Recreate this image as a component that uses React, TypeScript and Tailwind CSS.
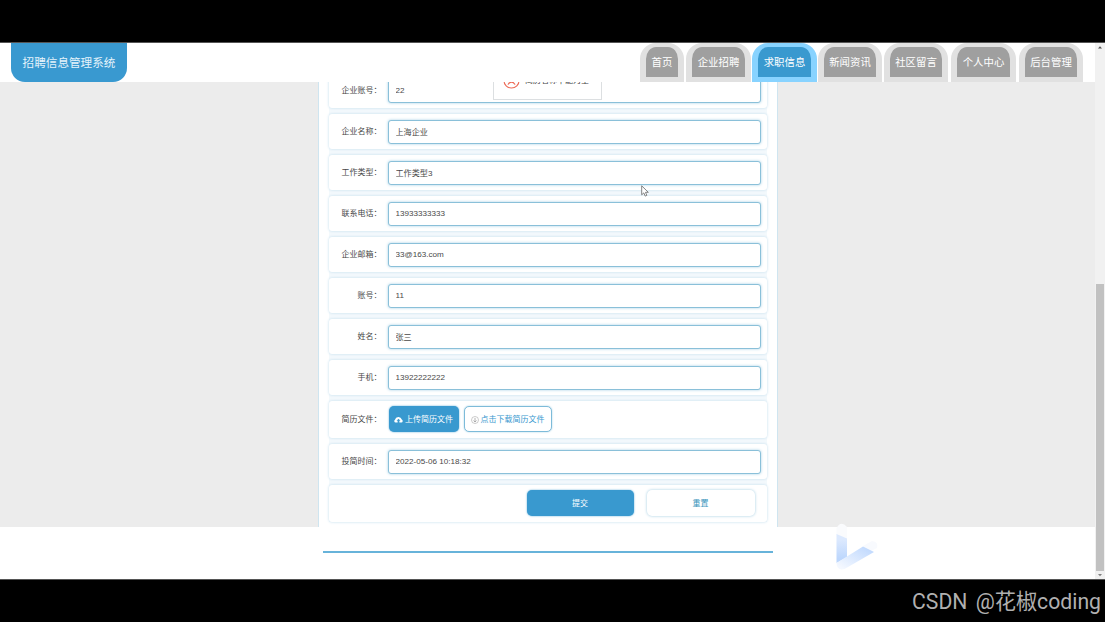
import clsx from "clsx";

type Field = { label: string; value: string };

const NAV_ITEMS = [
  { label: "首页", className: "w-[44px] mr-[2px]" },
  { label: "企业招聘", className: "w-[65px] mr-px" },
  { label: "求职信息", className: "w-[65px] mr-px", active: true },
  { label: "新闻资讯", className: "w-[64px] mr-[2px]" },
  { label: "社区留言", className: "w-[64px] mr-[3px]" },
  { label: "个人中心", className: "w-[65px] mr-[3px]" },
  { label: "后台管理", className: "w-[64px]" },
];

const FIELDS: Field[] = [
  { label: "企业账号", value: "22" },
  { label: "企业名称", value: "上海企业" },
  { label: "工作类型", value: "工作类型3" },
  { label: "联系电话", value: "13933333333" },
  { label: "企业邮箱", value: "33@163.com" },
  { label: "账号", value: "11" },
  { label: "姓名", value: "张三" },
  { label: "手机", value: "13922222222" },
];

const ROW = "flex shrink-0 items-center rounded-[3px] bg-white shadow-[0_0_3px_#bfdcec]";

function Label({ children }: { children: string }) {
  return <label className="w-[53px] shrink-0 pt-px text-right text-[#484848]">{children}：</label>;
}

function FieldRow({ label, value }: Field) {
  return (
    <div className={clsx(ROW, "h-[35px]")}>
      <Label>{label}</Label>
      <input
        readOnly
        defaultValue={value}
        className="ml-[6px] h-[24px] w-[373px] rounded-[3px] border border-[#8ac0d9] bg-white px-[7px] text-[8.1px] text-[#484848] shadow-[0_0_3px_#a4d0e5] outline-none"
      />
    </div>
  );
}

function Header() {
  return (
    <header className="relative z-20 flex h-[39px] shrink-0 justify-between bg-white pr-[12px] pl-[11px]">
      <div className="flex h-[39px] w-[116px] items-center justify-center rounded-b-[14px] bg-[#3999d0] text-[11.6px] text-[#e4f3fb]">
        招聘信息管理系统
      </div>
      <nav className="flex">
        {NAV_ITEMS.map(item => (
          <a
            key={item.label}
            className={clsx(
              "flex h-[39px] items-center justify-center rounded-t-[16px] border-x-[6px] border-t-[4px] border-b-[5px] pt-px text-[10.4px] whitespace-nowrap text-white",
              item.active ? "border-[#88d3ff] bg-[#3999cf]" : "border-[#e1e1e1] bg-[#9f9f9f]",
              item.className,
            )}
          >
            {item.label}
          </a>
        ))}
      </nav>
    </header>
  );
}

function Toast() {
  return (
    <div className="absolute top-[20px] left-[493px] z-10 flex h-[37px] w-[109px] items-center border border-[#dcdfe1] bg-white pb-[2px] pl-[9px] text-[#444]">
      <svg viewBox="0 0 18 18" className="mr-[5px] size-[17px] shrink-0" fill="none" stroke="#ed6b57" strokeWidth="1.2">
        <circle cx="9" cy="9" r="8" />
        <path d="M5.500 13c1.800-3 5.200-3 7 0M5.500 6.500h2M10.500 6.500h2" strokeLinecap="round" />
      </svg>
      <span className="pt-px whitespace-nowrap">简历名称不能为空</span>
    </div>
  );
}

function Scrollbar() {
  return (
    <div className="flex w-[10px] shrink-0 flex-col items-center bg-[#f1f1f1]">
      <svg viewBox="0 0 10 10" className="size-[10px] shrink-0">
        <path d="M3 5.5 5 3.2l2 2.3z" fill="#505050" />
      </svg>
      <div className="mt-[231px] h-[288px] w-[8px] bg-[#c1c1c1]" />
      <svg viewBox="0 0 10 8" className="h-[8px] w-[10px] shrink-0">
        <path d="M3 3h4L5 5.3z" fill="#808080" />
      </svg>
    </div>
  );
}

function Form() {
  return (
    <form className="mx-auto h-[445px] w-[460px] overflow-hidden border-x border-[#cfe5f0] bg-white px-[10px]">
      <div className="-mt-[9px] flex flex-col gap-[6px] bg-[#f4f9fc]">
        {FIELDS.map(field => (
          <FieldRow key={field.label} {...field} />
        ))}
        <div className={clsx(ROW, "h-[37px]")}>
          <Label>简历文件</Label>
          <button
            type="button"
            className="mb-px ml-[7px] flex h-[26px] w-[70px] items-center justify-center gap-[2px] rounded-[5px] bg-[#3999cf] pt-[2px] whitespace-nowrap text-white shadow-[0_0_2px_#5cacd8]"
          >
            <svg viewBox="0 0 20 16" className="mb-px h-[7px] w-[9px] shrink-0" fill="currentColor">
              <path d="M5 15H3.500A3.500 3.500 0 0 1 2 8.500 8 8 0 0 1 17.500 8 3.700 3.700 0 0 1 16.500 15H12v-4h2.500L10 6l-4.500 5H8v4z" />
            </svg>
            上传简历文件
          </button>
          <button
            type="button"
            className="mb-px ml-[5px] flex h-[26px] w-[88px] items-center justify-center gap-[2px] rounded-[5px] border border-[#7dbbd9] bg-white pt-[2px] whitespace-nowrap text-[#3999cf] shadow-[0_0_2px_#a4d0e5]"
          >
            <svg viewBox="0 0 16 16" className="size-[8px] shrink-0" fill="none" stroke="#999">
              <circle cx="8" cy="8" r="7" />
              <path d="M8 4v8M5 9l3 3 3-3" strokeWidth="1.500" />
            </svg>
            点击下载简历文件
          </button>
        </div>
        <FieldRow label="投简时间" value="2022-05-06 10:18:32" />
        <div className={clsx(ROW, "h-[37px] justify-end pr-[12px] pb-px")}>
          <button type="submit" className="h-[26px] w-[107px] rounded-[5px] bg-[#3999cf] pt-[2px] text-white shadow-[0_0_2px_#5cacd8]">
            提交
          </button>
          <button type="reset" className="ml-[13px] h-[26px] w-[108px] rounded-[5px] bg-white pt-[2px] text-[#3b96bd] shadow-[0_0_3px_#a0cbe0]">
            重置
          </button>
        </div>
      </div>
    </form>
  );
}

function Cursor() {
  return (
    <svg viewBox="0 0 8 12" className="absolute top-[142px] left-[641px] z-10 h-[12px] w-[8px]">
      <path d="M.7.8v9l2.100-1.900 1.400 3.200 1.600-.7L4.500 7.300h2.800z" fill="#fff" stroke="#666" strokeWidth=".8" />
    </svg>
  );
}

function RecorderLogo() {
  return (
    <svg viewBox="0 0 44 50" className="absolute top-[480px] left-[835px] h-[50px] w-[44px]">
      <defs>
        <linearGradient id="stem" x1="0" y1="0" x2="0" y2="1">
          <stop offset="0.2" stopColor="#dce9fe" />
          <stop offset="0.85" stopColor="#bdd7fd" />
        </linearGradient>
        <linearGradient id="arm" x1="0" y1="1" x2="1" y2="0">
          <stop offset="0.1" stopColor="#f4f8ff" />
          <stop offset="0.9" stopColor="#c0d9fe" />
        </linearGradient>
      </defs>
      <path d="M1.500 5Q6-3 12 4v12L1.500 12z" fill="#fafbfd" />
      <path d="M28 23 37 18q7 1 5 7l-8 4z" fill="#f8fafe" />
      <path d="M1.500 11 12 15.500V34L1.500 40z" fill="url(#stem)" />
      <path d="M1.500 40 28 23.500 39 29 9.500 46Q2 48 1.500 40z" fill="url(#arm)" />
    </svg>
  );
}

export default function App() {
  return (
    <div className="flex h-[622px] w-[1105px] flex-col overflow-hidden bg-black font-['Liberation_Sans','Noto_Sans_CJK_SC',sans-serif] text-[8px] leading-[12px]">
      <div className="h-[43px] shrink-0 border-b border-[#555]" />
      <div className="relative flex h-[536px] shrink-0 overflow-hidden bg-white">
        <div className="flex w-[1095px] shrink-0 flex-col">
          <Header />
          <main className="h-[445px] shrink-0 bg-[#ececec]">
            <Form />
          </main>
          <footer className="flex h-[52px] justify-center">
            <div className="mt-[24px] h-[2px] w-[450px] bg-[#67b3da]" />
          </footer>
        </div>
        <Scrollbar />
        <Toast />
        <Cursor />
        <RecorderLogo />
      </div>
      <div className="flex h-[43px] shrink-0 items-center justify-end border-t border-[#555] pt-[2px] pr-[4px] font-['Roboto','Noto_Sans_CJK_SC',sans-serif] text-[21.2px] font-normal [word-spacing:3px] text-[#b0b0b0]">
        CSDN @花椒coding
      </div>
    </div>
  );
}
